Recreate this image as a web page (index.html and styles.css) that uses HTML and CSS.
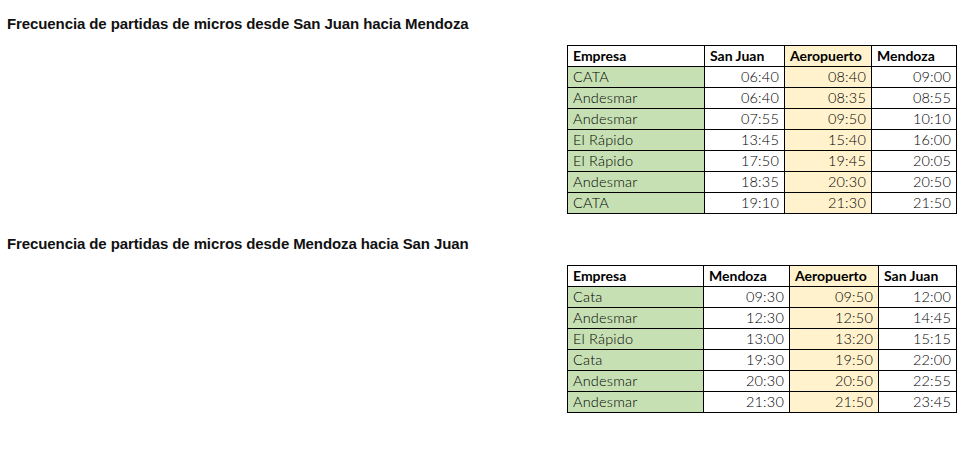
FILE: index.html
```html
<!DOCTYPE html>
<html lang="es">
<head>
<meta charset="utf-8">
<title>Frecuencia de micros</title>
<link rel="stylesheet" href="styles.css">
</head>
<body>
<section class="block first">
  <h2 class="title">Frecuencia de partidas de micros desde San Juan hacia Mendoza</h2>
  <table class="sched t1">
    <colgroup><col class="c1"><col class="c2"><col class="c3"><col class="c4"></colgroup>
    <thead>
      <tr><th>Empresa</th><th>San Juan</th><th class="air">Aeropuerto</th><th>Mendoza</th></tr>
    </thead>
    <tbody>
      <tr><td class="co">CATA</td><td>06:40</td><td class="air">08:40</td><td>09:00</td></tr>
      <tr><td class="co">Andesmar</td><td>06:40</td><td class="air">08:35</td><td>08:55</td></tr>
      <tr><td class="co">Andesmar</td><td>07:55</td><td class="air">09:50</td><td>10:10</td></tr>
      <tr><td class="co">El Rápido</td><td>13:45</td><td class="air">15:40</td><td>16:00</td></tr>
      <tr><td class="co">El Rápido</td><td>17:50</td><td class="air">19:45</td><td>20:05</td></tr>
      <tr><td class="co">Andesmar</td><td>18:35</td><td class="air">20:30</td><td>20:50</td></tr>
      <tr><td class="co">CATA</td><td>19:10</td><td class="air">21:30</td><td>21:50</td></tr>
    </tbody>
  </table>
</section>
<section class="block second">
  <h2 class="title">Frecuencia de partidas de micros desde Mendoza hacia San Juan</h2>
  <table class="sched t2">
    <colgroup><col class="c1"><col class="c2"><col class="c3"><col class="c4"></colgroup>
    <thead>
      <tr><th>Empresa</th><th>Mendoza</th><th class="air">Aeropuerto</th><th>San Juan</th></tr>
    </thead>
    <tbody>
      <tr><td class="co">Cata</td><td>09:30</td><td class="air">09:50</td><td>12:00</td></tr>
      <tr><td class="co">Andesmar</td><td>12:30</td><td class="air">12:50</td><td>14:45</td></tr>
      <tr><td class="co">El Rápido</td><td>13:00</td><td class="air">13:20</td><td>15:15</td></tr>
      <tr><td class="co">Cata</td><td>19:30</td><td class="air">19:50</td><td>22:00</td></tr>
      <tr><td class="co">Andesmar</td><td>20:30</td><td class="air">20:50</td><td>22:55</td></tr>
      <tr><td class="co">Andesmar</td><td>21:30</td><td class="air">21:50</td><td>23:45</td></tr>
    </tbody>
  </table>
</section>
</body>
</html>
```
FILE: styles.css
```css
html, body {
  margin: 0;
  padding: 0;
  background: #ffffff;
}
body {
  width: 976px;
  height: 449px;
  overflow: hidden;
  font-family: "Liberation Sans", Arial, sans-serif;
  color: #000;
}
.block {
  display: flex;
  flex-direction: column;
  padding: 0 19px 0 7px;
}
.first { margin-top: 15px; }
.second { margin-top: 21px; }
.title {
  margin: 0;
  font-size: 15px;
  line-height: 18px;
  letter-spacing: -0.1px;
  font-weight: bold;
  color: #111;
}
.sched {
  align-self: flex-end;
  margin-top: 12px;
  border-collapse: collapse;
  table-layout: fixed;
  font-family: Lato, "Open Sans", sans-serif;
  font-size: 14.5px;
  color: #000;
}
.sched th, .sched td {
  border: 1px solid #000;
  height: 21px;
  padding: 0 5px;
  box-sizing: border-box;
  line-height: 18px;
  white-space: nowrap;
}
.sched th {
  text-align: left;
  font-weight: bold;
  font-size: 14px;
  color: #000;
}
.sched td {
  text-align: right;
  font-weight: 300;
  letter-spacing: 0.2px;
  color: #000;
}
.sched td.co {
  text-align: left;
  background: #c6e0b4;
}
.sched .air {
  background: #fff2cc;
}
.t1 { width: 389px; }
.t1 .c1 { width: 137px; }
.t1 .c2 { width: 80px; }
.t1 .c3 { width: 87px; }
.t1 .c4 { width: 85px; }
.t2 { width: 389px; }
.t2 .c1 { width: 136px; }
.t2 .c2 { width: 86px; }
.t2 .c3 { width: 89px; }
.t2 .c4 { width: 78px; }
```
